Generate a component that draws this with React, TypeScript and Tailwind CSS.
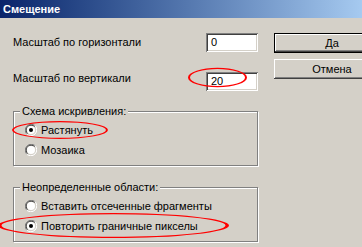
import React from "react";

const sunken =
  "bg-white shadow-[inset_1px_1px_0_#808080,inset_-1px_-1px_0_#fff,inset_2px_2px_0_#404040,inset_-2px_-2px_0_#d4d0c8]";
const raised =
  "shadow-[inset_-1px_-1px_0_#404040,inset_1px_1px_0_#fff,inset_-2px_-2px_0_#808080,inset_2px_2px_0_#d4d0c8]";

const Radio = ({ checked, label }: { checked?: boolean; label: string }) => (
  <div className="flex items-center h-[20px] pl-[11px] gap-[4px]">
    <svg width="12" height="12" viewBox="0 0 12 12">
      <path d="M10.5 2 A5.5 5.5 0 0 0 2 10.5" stroke="#808080" fill="none" />
      <path d="M9.6 2.6 A4.5 4.5 0 0 0 2.6 9.6" stroke="#404040" fill="none" />
      <path d="M1.5 10 A5.5 5.5 0 0 0 10 1.5" stroke="#fff" fill="none" />
      <circle cx="6" cy="6" r="4" fill="#fff" />
      {checked && <circle cx="6" cy="6" r="2" fill="#000" />}
    </svg>
    <span>{label}</span>
  </div>
);

const Group = ({ title, children }: { title: string; children: React.ReactNode }) => (
  <div className="relative h-[55px] border border-[#808080] shadow-[inset_1px_1px_0_#fff,1px_1px_0_#fff] pt-[8px]">
    <div className="absolute left-[6px] top-[-8px] px-[2px] bg-[#d4d0c8] leading-[14px]">{title}</div>
    {children}
  </div>
);

// red annotation ring: two ellipses, even-odd, thicker at the ends
const ring = (cx: number, cy: number, rx: number, ry: number, t: number) =>
  `M${cx - rx} ${cy} a${rx} ${ry} 0 1 0 ${rx * 2} 0 a${rx} ${ry} 0 1 0 ${-rx * 2} 0 Z ` +
  `M${cx - rx + t} ${cy} a${rx - t} ${ry - 1.2} 0 1 0 ${(rx - t) * 2} 0 a${rx - t} ${ry - 1.2} 0 1 0 ${-(rx - t) * 2} 0 Z`;

export default function App() {
  return (
    <div className="relative w-[362px] h-[247px] overflow-hidden bg-[#d4d0c8] text-black text-[11px] font-['Liberation_Sans',Tahoma,sans-serif]">
      <div className="h-[18px] bg-gradient-to-r from-[#0a246a] to-[#a6caf0] text-white font-bold text-[11px] pl-[3px] flex items-center">
        Смещение
      </div>

      <div className="flex pl-[13px] gap-[16px]">
        <div className="w-[245px] shrink-0">
          <div className="flex items-center justify-between mt-[15px]">
            <span>Масштаб по горизонтали</span>
            <div className={`w-[52px] h-[19px] ${sunken} flex items-center pl-[5px]`}>0</div>
          </div>
          <div className="flex items-start justify-between mt-[20px]">
            <span className="-mt-[2px]">Масштаб по вертикали</span>
            <div className={`w-[52px] h-[19px] ${sunken} flex items-center pl-[5px]`}>20</div>
          </div>

          <div className="mt-[20px]">
            <Group title="Схема искривления:">
              <Radio checked label="Растянуть" />
              <Radio label="Мозаика" />
            </Group>
          </div>
          <div className="mt-[21px]">
            <Group title="Неопределенные области:">
              <Radio label="Вставить отсеченные фрагменты" />
              <Radio checked label="Повторить граничные пикселы" />
            </Group>
          </div>
        </div>

        <div className="flex flex-col gap-[6px] pt-[15px] shrink-0">
          <div className="w-[116px] h-[20px] border border-black">
            <div className={`h-full flex items-center justify-center ${raised}`}>Да</div>
          </div>
          <div className={`w-[116px] h-[20px] flex items-center justify-center ${raised}`}>Отмена</div>
        </div>
      </div>

      <svg className="absolute inset-0 pointer-events-none" width="362" height="247">
        <path d={ring(217.5, 77.5, 29.5, 9.7, 2)} fill="#ff0000" fillRule="evenodd" />
        <path d={ring(60, 130, 48, 9, 2)} fill="#ff0000" fillRule="evenodd" />
        <path d={ring(113.5, 225.5, 115.5, 12.5, 3.5)} fill="#ff0000" fillRule="evenodd" />
      </svg>
    </div>
  );
}
